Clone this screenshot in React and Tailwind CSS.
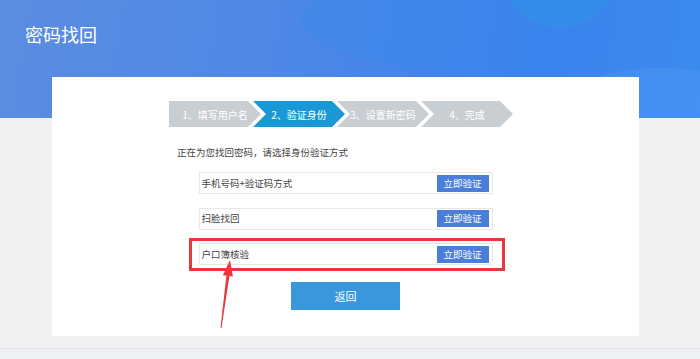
const STEPS = [
  { label: "1、填写用户名", active: false },
  { label: "2、验证身份", active: true },
  { label: "3、设置新密码", active: false },
  { label: "4、完成", active: false },
];

const METHODS = ["手机号码+验证码方式", "扫脸找回", "户口簿核验"];

const FONT = "font-['Noto_Sans_CJK_SC','Noto_Sans',sans-serif]";

function Step({ label, active, first }) {
  const shape = first
    ? "[clip-path:polygon(0_0,calc(100%_-_13px)_0,100%_50%,calc(100%_-_13px)_100%,0_100%)]"
    : "[clip-path:polygon(0_0,calc(100%_-_13px)_0,100%_50%,calc(100%_-_13px)_100%,0_100%,13px_50%)]";
  return (
    <div
      className={`flex h-[26px] w-[92px] items-center justify-center text-[10px] text-white ${shape} ${
        first ? "" : "-ml-[8px]"
      } ${active ? "bg-[#1a98d6]" : "bg-[#c9ced3]"}`}
    >
      {label}
    </div>
  );
}

function MethodRow({ label, highlight }) {
  return (
    <div className="relative mx-auto w-[294px]">
      <div className="flex h-[22px] items-center justify-between border border-[#e7e7e7] pl-[2px] pr-[3px]">
        <span className="text-[9.5px] text-[#444]">{label}</span>
        <button className="h-[17px] w-[52px] bg-[#4b7ed9] text-[9.5px] text-white">立即验证</button>
      </div>
      {highlight && (
        <div className="pointer-events-none absolute -bottom-[6px] -left-[10px] -right-[12px] -top-[5px] border-[3px] border-[#e8383d]" />
      )}
    </div>
  );
}

export default function App() {
  return (
    <div className={`relative flex min-h-[359px] w-full flex-col overflow-hidden bg-[#f1f1f1] ${FONT}`}>
      {/* header */}
      <div className="relative h-[118px] overflow-hidden bg-[linear-gradient(100deg,#5b8de0_0%,#4c87e7_45%,#3c80f0_78%,#3e8cf0_100%)]">
        <div className="absolute -top-[88px] left-[502px] h-[116px] w-[116px] rounded-full bg-[#2c95e2] opacity-70" />
        <div className="absolute -top-[40px] left-[300px] h-[120px] w-[520px] rounded-[50%] bg-[#3a8aeb] opacity-40" />
        <div className="absolute left-[560px] top-[68px] h-[80px] w-[200px] rounded-[50%] bg-[#4a95f2] opacity-60" />
        <h1 className="relative pl-[25px] pt-[22px] text-[18px] leading-[24px] text-white">密码找回</h1>
      </div>

      {/* card */}
      <div className="relative -mt-[41px] ml-[52px] h-[259px] w-[587px] bg-white">
        <div className="ml-[117px] mt-[24px] flex">
          {STEPS.map((s, i) => (
            <Step key={s.label} label={s.label} active={s.active} first={i === 0} />
          ))}
        </div>

        <p className="ml-[125px] mt-[18px] text-[9.5px] leading-[14px] text-[#444]">
          正在为您找回密码，请选择身份验证方式
        </p>

        <div className="mt-[13px] flex flex-col gap-[13.5px]">
          {METHODS.map((m, i) => (
            <MethodRow key={m} label={m} highlight={i === 2} />
          ))}
        </div>

        <button className="mx-auto mt-[17px] block h-[28px] w-[109px] bg-[#3a97dc] text-[11px] text-white">
          返回
        </button>
      </div>

      <div className="mt-[12px] h-[11px] flex-1 border-t border-[#e1e3e7] bg-[#eff0f3]" />

      {/* annotation arrow */}
      <svg className="pointer-events-none absolute left-[212px] top-[255px]" width="30" height="80" viewBox="0 0 30 80">
        <polygon points="18,5 20.9,21.6 10.9,20.2" fill="#e8383d" />
        <polygon points="17.4,21 14.4,20.6 8.5,72.9 9.5,73.1" fill="#e8383d" />
      </svg>
    </div>
  );
}
